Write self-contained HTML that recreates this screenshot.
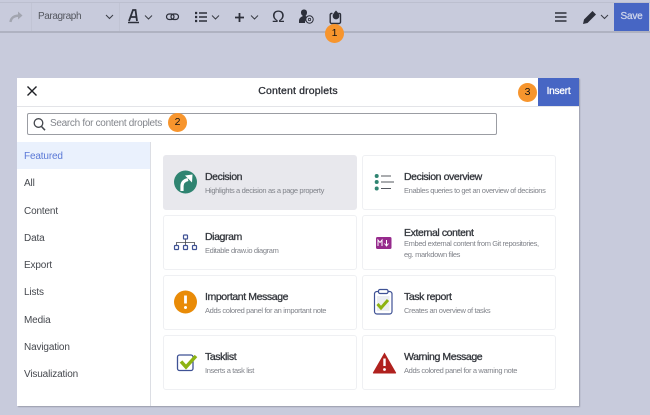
<!DOCTYPE html>
<html><head><meta charset="utf-8"><style>
html,body{margin:0;padding:0}
body{width:650px;height:415px;position:relative;overflow:hidden;background:#c8cbdc;font-family:"Liberation Sans",sans-serif;color:#2c2f36}
.a{position:absolute;white-space:nowrap}
svg{position:absolute;overflow:visible}
.card{position:absolute;width:192px;height:53px;background:#fff;border:1px solid #eff0f3;border-radius:3px;box-sizing:content-box}
.t{position:absolute;white-space:nowrap;font-size:10.5px;color:#33363c;line-height:12px;letter-spacing:-.4px;-webkit-text-stroke:.3px #33363c}
.d{position:absolute;white-space:nowrap;font-size:7.5px;color:#80838a;line-height:10px;letter-spacing:-.36px}
.n{position:absolute;left:24px;font-size:10px;line-height:12px;color:#45484e;white-space:nowrap;letter-spacing:-.15px}
.b{position:absolute;width:19px;height:19px;border-radius:50%;background:#f7952d;color:#111;font-size:10.5px;line-height:19px;text-align:center}
</style></head><body>
<div class="a" style="left:0;top:2px;width:650px;height:1px;background:#bcbfcf"></div>
<div class="a" style="left:0;top:31px;width:650px;height:2px;background:#afb2c1"></div>
<div class="a" style="left:31px;top:3px;width:1px;height:28px;background:#c1c4d4"></div>
<div class="a" style="left:119px;top:3px;width:1px;height:28px;background:#c1c4d4"></div>

<svg style="left:0;top:0" width="650" height="33" fill="none">
<path d="M10.500 22c.5-4 3-6.500 10-6.500" stroke="#a2a5b0" stroke-width="2.400"/><path d="M18 11.500l4.500 4-4.500 4z" fill="#a2a5b0"/>
<path d="M106 15l3.500 3.500 3.500-3.500M145 15.500l3.500 3.500 3.500-3.500M212 15.500l3.500 3.500 3.500-3.500M251 15.500l3.500 3.500 3.500-3.500M601 15l3.500 3.500 3.500-3.500" stroke="#3a3d46" stroke-width="1"/>
<path d="M129 21l4-11h2.500l1.500 11M131 17h5.500" stroke="#2c2f3a" stroke-width="1.800"/><path d="M128 22.500h11" stroke="#2c2f3a" stroke-width="1.500"/>
<rect x="166.500" y="14" width="7.500" height="5.500" rx="2.700" stroke="#2c2f3a" stroke-width="1.200"/><rect x="171" y="14" width="7.500" height="5.500" rx="2.700" stroke="#2c2f3a" stroke-width="1.200"/>
<path d="M195 13h2.200M195 17h2.200M195 21h2.200" stroke="#2c2f3a" stroke-width="2.200"/><path d="M199 13h8M199 17h8M199 21h8" stroke="#2c2f3a" stroke-width="1.600"/>
<path d="M239.500 13v9M235 17.500h9" stroke="#2c2f3a" stroke-width="1.800"/>
<path d="M299 23v-2c0-3 2-4 4-5-1.500-1-2-2-2-3.500 0-2 1.300-3 3-3s3 1 3 3c0 1.500-.5 2.500-1.500 3.500 1 .5 1.500 1 2 2-1.500 1-2.500 2.500-2.500 5z" fill="#2c2f3a"/>
<circle cx="309.500" cy="19.500" r="3.700" fill="#c8cbdc" stroke="#2c2f3a" stroke-width="1"/><circle cx="309.500" cy="19.500" r="1.200" stroke="#2c2f3a" stroke-width=".8"/>
<path d="M332.500 13.500h-1a1.300 1.300 0 0 0-1.300 1.300v7.200a1.500 1.500 0 0 0 1.500 1.500h7.300a1.500 1.500 0 0 0 1.500-1.500v-7.200a1.300 1.300 0 0 0-1.300-1.300h-1" stroke="#2c2f3a" stroke-width="1.400"/>
<path d="M336 10.500c2 2.200 3.300 3.800 3.300 5.600a3.300 3.300 0 0 1-6.600 0c0-1.800 1.300-3.400 3.300-5.600z" fill="#2c2f3a"/>
<path d="M555 13h11.500M555 17h11.500M555 21h11.500" stroke="#2c2f3a" stroke-width="1.500"/>
<path d="M583 24l1-4.500 8.500-8.500 3.500 3.500-8.500 8.500z" fill="#2c2f3a"/>
</svg>
<div class="a" style="left:38px;top:11px;font-size:10px;line-height:12px;color:#54575f;letter-spacing:-.4px">Paragraph</div>
<div class="a" style="left:272px;top:7px;font-size:17px;line-height:20px;color:#2c2f3a">Ω</div>
<div class="a" style="left:614px;top:3px;width:35px;height:28px;background:#4766c4;color:#cdd4ea;font-size:10px;-webkit-text-stroke:.3px #cdd4ea;letter-spacing:-.2px;line-height:27px;text-align:center">Save</div>

<div class="a" style="left:17px;top:78px;width:562px;height:328px;background:#fff;box-shadow:1px 1px 1px #9a9dac"></div>
<div class="a" style="left:17px;top:106px;width:562px;height:1px;background:#e3e4e8"></div>
<svg style="left:0;top:0" width="60" height="110" fill="none"><path d="M27.500 86.500l9 9M36.500 86.500l-9 9" stroke="#1f2126" stroke-width="1.400"/></svg>
<div class="a" style="left:17px;top:85px;width:562px;text-align:center;font-size:10.500px;line-height:13px;color:#2c2f36;-webkit-text-stroke:.3px #2c2f36;letter-spacing:.15px">Content droplets</div>
<div class="a" style="left:538px;top:78px;width:41px;height:28px;background:#4766c4;color:#fff;font-size:10px;-webkit-text-stroke:.3px #fff;letter-spacing:-.2px;line-height:28px;text-align:center">Insert</div>

<div class="a" style="left:27px;top:113px;width:470px;height:22px;box-sizing:border-box;border:1px solid #9b9da3;border-radius:2px"></div>
<svg style="left:0;top:110px" width="60" height="30" fill="none"><circle cx="38.500" cy="13" r="4.300" stroke="#44474d" stroke-width="1.300"/><path d="M41.500 16.500l3.500 3.700" stroke="#44474d" stroke-width="1.500"/></svg>
<div class="a" style="left:50px;top:118px;font-size:10px;line-height:12px;color:#83868c;letter-spacing:-.3px">Search for content droplets</div>

<div class="a" style="left:17px;top:142px;width:133px;height:27px;background:#eaf1fd"></div>
<div class="a" style="left:150px;top:142px;width:1px;height:264px;background:#dcdee4"></div>
<div class="n" style="top:151px;color:#5a78d6">Featured</div>
<div class="n" style="top:178px">All</div>
<div class="n" style="top:206px">Content</div>
<div class="n" style="top:233px">Data</div>
<div class="n" style="top:260px">Export</div>
<div class="n" style="top:287px">Lists</div>
<div class="n" style="top:315px">Media</div>
<div class="n" style="top:342px">Navigation</div>
<div class="n" style="top:369px">Visualization</div>

<div class="card" style="left:163px;top:155px;background:#e8e8ed;border-color:#e8e8ed"></div>
<div class="card" style="left:362px;top:155px"></div>
<div class="card" style="left:163px;top:215px"></div>
<div class="card" style="left:362px;top:215px"></div>
<div class="card" style="left:163px;top:275px"></div>
<div class="card" style="left:362px;top:275px"></div>
<div class="card" style="left:163px;top:335px"></div>
<div class="card" style="left:362px;top:335px"></div>

<div class="t" style="left:205px;top:171px">Decision</div>
<div class="d" style="left:205px;top:186px">Highlights a decision as a page property</div>
<div class="t" style="left:404px;top:171px">Decision overview</div>
<div class="d" style="left:404px;top:186px">Enables queries to get an overview of decisions</div>
<div class="t" style="left:205px;top:231px">Diagram</div>
<div class="d" style="left:205px;top:246px">Editable draw.io diagram</div>
<div class="t" style="left:404px;top:227px">External content</div>
<div class="d" style="left:404px;top:239px">Embed external content from Git repositories,</div>
<div class="d" style="left:404px;top:250px">eg. markdown files</div>
<div class="t" style="left:205px;top:291px">Important Message</div>
<div class="d" style="left:205px;top:306px">Adds colored panel for an important note</div>
<div class="t" style="left:404px;top:291px">Task report</div>
<div class="d" style="left:404px;top:306px">Creates an overview of tasks</div>
<div class="t" style="left:205px;top:351px">Tasklist</div>
<div class="d" style="left:205px;top:366px">Inserts a task list</div>
<div class="t" style="left:404px;top:351px">Warning Message</div>
<div class="d" style="left:404px;top:366px">Adds colored panel for a warning note</div>

<svg style="left:0;top:0" width="650" height="415" fill="none">
<circle cx="185.500" cy="182" r="11.500" fill="#2f8471"/>
<path d="M182 191v-5c0-3.500 2-5.500 6-6.500" stroke="#fff" stroke-width="3.200"/><path d="M185 175.500l7.500-1 -.5 8z" fill="#fff"/>

<circle cx="376.700" cy="176" r="2" fill="#2f8471"/><circle cx="376.700" cy="182" r="2" fill="#2f8471"/><circle cx="376.700" cy="188.500" r="2" fill="#2f8471"/>
<path d="M381 176h10M381 182h13M381 188.500h10" stroke="#55585f" stroke-width="1"/>

<rect x="183.500" y="235" width="4" height="4" rx=".8" stroke="#3f5295" stroke-width="1.200"/>
<rect x="174.500" y="245.500" width="4" height="4" rx=".8" stroke="#3f5295" stroke-width="1.200"/>
<rect x="183.500" y="245.500" width="4" height="4" rx=".8" stroke="#3f5295" stroke-width="1.200"/>
<rect x="192.500" y="245.500" width="4" height="4" rx=".8" stroke="#3f5295" stroke-width="1.200"/>
<path d="M185.500 239.500v5.500M176.500 245v-2.500h18v2.500" stroke="#45484e" stroke-width=".8"/>

<rect x="376" y="237" width="15.500" height="12" rx="1.500" fill="#962a8c"/>
<path d="M378 246v-6l2 2.500 2-2.500v6M386.500 240v5.500M384.500 243.500l2 2.500 2-2.500" stroke="#fff" stroke-width="1"/>

<circle cx="185.500" cy="302" r="11.500" fill="#e98b07"/>
<path d="M185.500 295.500v8" stroke="#fff" stroke-width="2.800"/><circle cx="185.500" cy="307.500" r="1.500" fill="#fff"/>

<rect x="374.500" y="291.500" width="17.500" height="22.500" rx="2.500" fill="#fff" stroke="#3f5295" stroke-width="1.200"/>
<rect x="378.500" y="289.500" width="9.500" height="4" rx="1.500" fill="#fff" stroke="#3f5295" stroke-width="1.200"/>
<rect x="377" y="296" width="12.500" height="15" fill="#eceef2"/>
<path d="M377.500 304l3.500 4 7-8" stroke="#8db312" stroke-width="3"/>

<rect x="177.500" y="355" width="15.500" height="15.500" rx="2" fill="#fff" stroke="#3f5295" stroke-width="1.300"/>
<path d="M181 361.500l5 5.500 10-11" stroke="#8db312" stroke-width="3.500"/>

<path d="M384.500 352.500l11.500 20a.6 .6 0 0 1-.5 1h-22a.6 .6 0 0 1-.5-1z" fill="#b0211e"/>
<path d="M384.500 358.500v7.500" stroke="#fff" stroke-width="2.400"/><circle cx="384.500" cy="369.500" r="1.400" fill="#fff"/>
</svg>

<div class="b" style="left:325px;top:24px">1</div>
<div class="b" style="left:168px;top:113px">2</div>
<div class="b" style="left:518px;top:83px">3</div>
</body></html>
